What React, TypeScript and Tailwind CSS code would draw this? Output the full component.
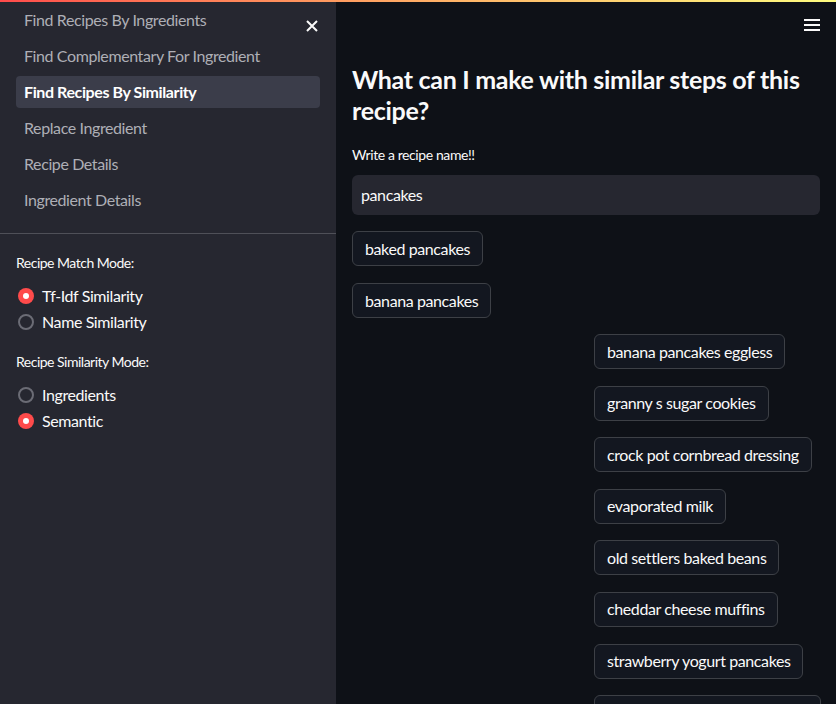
import React, { useState } from "react";

const navItems = [
  "Find Recipes By Ingredients",
  "Find Complementary For Ingredient",
  "Find Recipes By Similarity",
  "Replace Ingredient",
  "Recipe Details",
  "Ingredient Details",
];

const results = [
  "banana pancakes eggless",
  "granny s sugar cookies",
  "crock pot cornbread dressing",
  "evaporated milk",
  "old settlers baked beans",
  "cheddar cheese muffins",
  "strawberry yogurt pancakes",
  "blueberry buttermilk pancakes",
];

const Radio: React.FC<{ label: string; checked: boolean; onClick: () => void }> = ({ label, checked, onClick }) => (
  <button onClick={onClick} className="flex items-center h-[26px] gap-2 pl-[2px] text-[16px] tracking-[-0.4px] text-[#fafafa]">
    {checked ? (
      <span className="w-4 h-4 rounded-full bg-[#ff4b4b] flex items-center justify-center">
        <span className="w-[6px] h-[6px] rounded-full bg-white" />
      </span>
    ) : (
      <span className="w-4 h-4 rounded-full border-2 border-[#6b6c75]" />
    )}
    {label}
  </button>
);

const App: React.FC = () => {
  const [matchMode, setMatchMode] = useState("tfidf");
  const [simMode, setSimMode] = useState("semantic");
  const [query, setQuery] = useState("pancakes");

  return (
    <div className="h-[704px] w-full flex flex-col overflow-hidden bg-[#0e1117] font-['Lato',sans-serif]">
      <div className="h-[2px] shrink-0 bg-linear-to-r from-[#ff4b4b] to-[#fffd80]" />
      <div className="flex flex-1 min-h-0">
        {/* sidebar */}
        <aside className="relative w-[336px] shrink-0 bg-[#262730]">
          <button className="absolute right-[17px] top-[17px] text-[#fafafa]">
            <svg width="14" height="14" viewBox="0 0 14 14" fill="none" stroke="currentColor" strokeWidth="2">
              <path d="M2 2l10 10M12 2L2 12" />
            </svg>
          </button>
          <nav className="flex flex-col gap-1 px-4 pt-[2px] pb-[17px] border-b border-[#4f5058]">
            {navItems.map((item) => {
              const active = item === "Find Recipes By Similarity";
              return (
                <div
                  key={item}
                  className={
                    active
                      ? "h-8 flex items-center px-2 rounded bg-[#3b3d4a] text-white font-bold text-[16px] tracking-[-0.4px]"
                      : "h-8 flex items-center px-2 text-[#aeafb6] text-[16px] tracking-[-0.4px]"
                  }
                >
                  {item}
                </div>
              );
            })}
          </nav>
          <div className="px-4 pt-[19px] flex flex-col">
            <div className="text-[14px] tracking-[-0.5px] text-[#fafafa] h-5 leading-5">Recipe Match Mode:</div>
            <div className="flex flex-col mt-[10px]">
              <Radio label="Tf-Idf Similarity" checked={matchMode === "tfidf"} onClick={() => setMatchMode("tfidf")} />
              <Radio label="Name Similarity" checked={matchMode === "name"} onClick={() => setMatchMode("name")} />
            </div>
            <div className="text-[14px] tracking-[-0.5px] text-[#fafafa] h-5 leading-5 mt-[17px]">Recipe Similarity Mode:</div>
            <div className="flex flex-col mt-[10px]">
              <Radio label="Ingredients" checked={simMode === "ingredients"} onClick={() => setSimMode("ingredients")} />
              <Radio label="Semantic" checked={simMode === "semantic"} onClick={() => setSimMode("semantic")} />
            </div>
          </div>
        </aside>

        {/* main */}
        <main className="relative flex-1 min-w-0 px-4">
          <button className="absolute right-[16px] top-[16px] text-[#fafafa]">
            <svg width="16" height="14" viewBox="0 0 16 14" fill="currentColor">
              <rect x="0" y="1" width="16" height="2" />
              <rect x="0" y="6" width="16" height="2" />
              <rect x="0" y="11" width="16" height="2" />
            </svg>
          </button>
          <h1 className="mt-[62px] text-[25px] leading-[31px] tracking-[-0.3px] font-bold text-[#fafafa]">
            What can I make with similar steps of this recipe?
          </h1>
          <div className="mt-[19px] text-[14px] tracking-[-0.4px] leading-5 text-[#fafafa]">Write a recipe name!!</div>
          <input
            value={query}
            onChange={(e) => setQuery(e.target.value)}
            className="mt-[10px] w-full h-10 rounded-md bg-[#262730] px-[9px] pb-[2px] text-[16px] tracking-[-0.4px] text-[#fafafa] outline-none"
          />
          <div className="mt-4 flex flex-col items-start gap-[17px]">
            <button className="h-[35px] px-3 rounded-md border border-[#3d4046] bg-[#131720] text-[16px] tracking-[-0.4px] text-[#fafafa]">
              baked pancakes
            </button>
            <button className="h-[35px] px-3 rounded-md border border-[#3d4046] bg-[#131720] text-[16px] tracking-[-0.4px] text-[#fafafa]">
              banana pancakes
            </button>
          </div>
          <div className="mt-4 grid grid-cols-2 gap-4">
            <div />
            <div className="flex flex-col items-start gap-[16.6px]">
              {results.map((r) => (
                <button
                  key={r}
                  className="h-[35px] px-3 rounded-md border border-[#3d4046] bg-[#131720] text-[16px] tracking-[-0.4px] text-[#fafafa] whitespace-nowrap"
                >
                  {r}
                </button>
              ))}
            </div>
          </div>
        </main>
      </div>
    </div>
  );
};

export default App;
